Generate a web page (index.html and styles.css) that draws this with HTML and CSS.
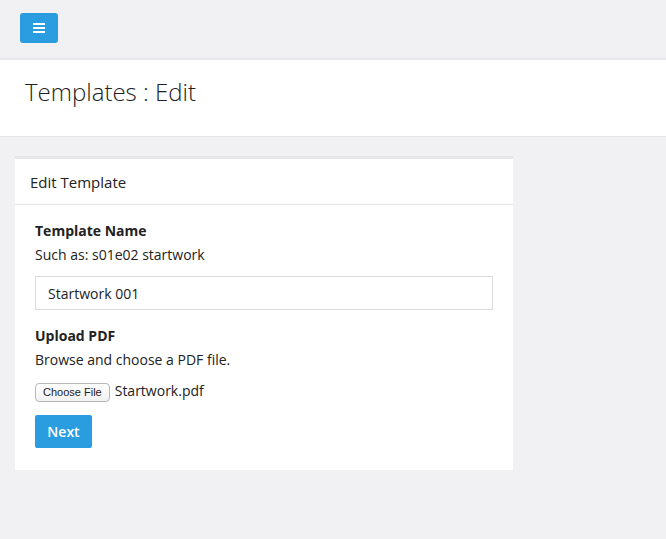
FILE: index.html
```html
<!DOCTYPE html>
<html>
<head>
<meta charset="utf-8">
<link rel="stylesheet" href="styles.css">
</head>
<body>
<div class="topbar">
  <button class="menu-btn" aria-label="Menu">
    <svg width="12" height="10" viewBox="0 0 12 10"><rect x="0" y="0" width="12" height="2" fill="#fff"/><rect x="0" y="4" width="12" height="2" fill="#fff"/><rect x="0" y="8" width="12" height="2" fill="#fff"/></svg>
  </button>
</div>
<div class="page-header">
  <h1 class="page-title">Templates : Edit</h1>
</div>
<div class="content">
  <div class="card">
    <div class="card-header">Edit Template</div>
    <div class="card-body">
      <div class="field">
        <div class="label">Template Name</div>
        <div class="help">Such as: s01e02 startwork</div>
        <div class="input">Startwork 001</div>
      </div>
      <div class="field">
        <div class="label">Upload PDF</div>
        <div class="help">Browse and choose a PDF file.</div>
        <div class="file-row">
          <span class="file-btn">Choose File</span>
          <span class="file-name">Startwork.pdf</span>
        </div>
      </div>
      <button class="next-btn">Next</button>
    </div>
  </div>
</div>
</body>
</html>
```
FILE: styles.css
```css
html, body {
  margin: 0;
  padding: 0;
}
body {
  background: #f1f1f3;
  font-family: "Open Sans", "Liberation Sans", sans-serif;
  color: #222;
  font-size: 14px;
}
.topbar {
  height: 60px;
  padding: 13px 20px 0;
  box-sizing: border-box;
  border-bottom: 2px solid #e9e9eb;
}
.menu-btn {
  width: 38px;
  height: 30px;
  border: none;
  border-radius: 3px;
  background: #2a9de0;
  display: flex;
  align-items: center;
  justify-content: center;
  padding: 0;
}
.page-header {
  background: #fff;
  height: 77px;
  box-sizing: border-box;
  border-bottom: 1px solid #e4e4e6;
  padding: 0 25px;
  display: flex;
  align-items: center;
}
.page-title {
  margin: 0;
  font-size: 24px;
  font-weight: 300;
  color: #222;
  line-height: 1;
  padding-bottom: 12px;
}
.content {
  padding: 19px 15px;
}
.card {
  width: 498px;
  background: #fff;
  border-top: 3px solid #e7e7e9;
}
.card-header {
  height: 46px;
  box-sizing: border-box;
  border-bottom: 1px solid #e6e6e8;
  padding: 0 15px;
  display: flex;
  align-items: center;
  font-size: 15px;
  color: #222;
}
.card-body {
  padding: 14px 20px 22px;
}
.label {
  font-weight: 700;
  line-height: 24px;
}
.help {
  line-height: 24px;
  margin-bottom: 9px;
  color: #222;
}
.field + .field .help {
  margin-bottom: 7px;
}
.input {
  height: 34px;
  box-sizing: border-box;
  border: 1px solid #dcdcde;
  padding: 0 12px;
  display: flex;
  align-items: center;
  width: 458px;
  margin-bottom: 14px;
}
.file-row {
  display: flex;
  align-items: center;
  height: 22px;
  margin-bottom: 14px;
}
.file-btn {
  font-family: "Liberation Sans", Arial, sans-serif;
  font-size: 11px;
  border: 1px solid #b8b8b8;
  border-radius: 4px;
  background: linear-gradient(#fff, #f1f1f1);
  padding: 0 7px;
  height: 17px;
  line-height: 17px;
  color: #222;
  margin-top: 4px;
}
.file-name {
  font-size: 14px;
  margin-left: 5px;
}
.next-btn {
  font-family: "Open Sans", "Liberation Sans", sans-serif;
  font-size: 14px;
  font-weight: 600;
  color: #fff;
  background: #2a9de0;
  border: none;
  border-radius: 2px;
  width: 57px;
  height: 33px;
  padding: 0;
}
```
